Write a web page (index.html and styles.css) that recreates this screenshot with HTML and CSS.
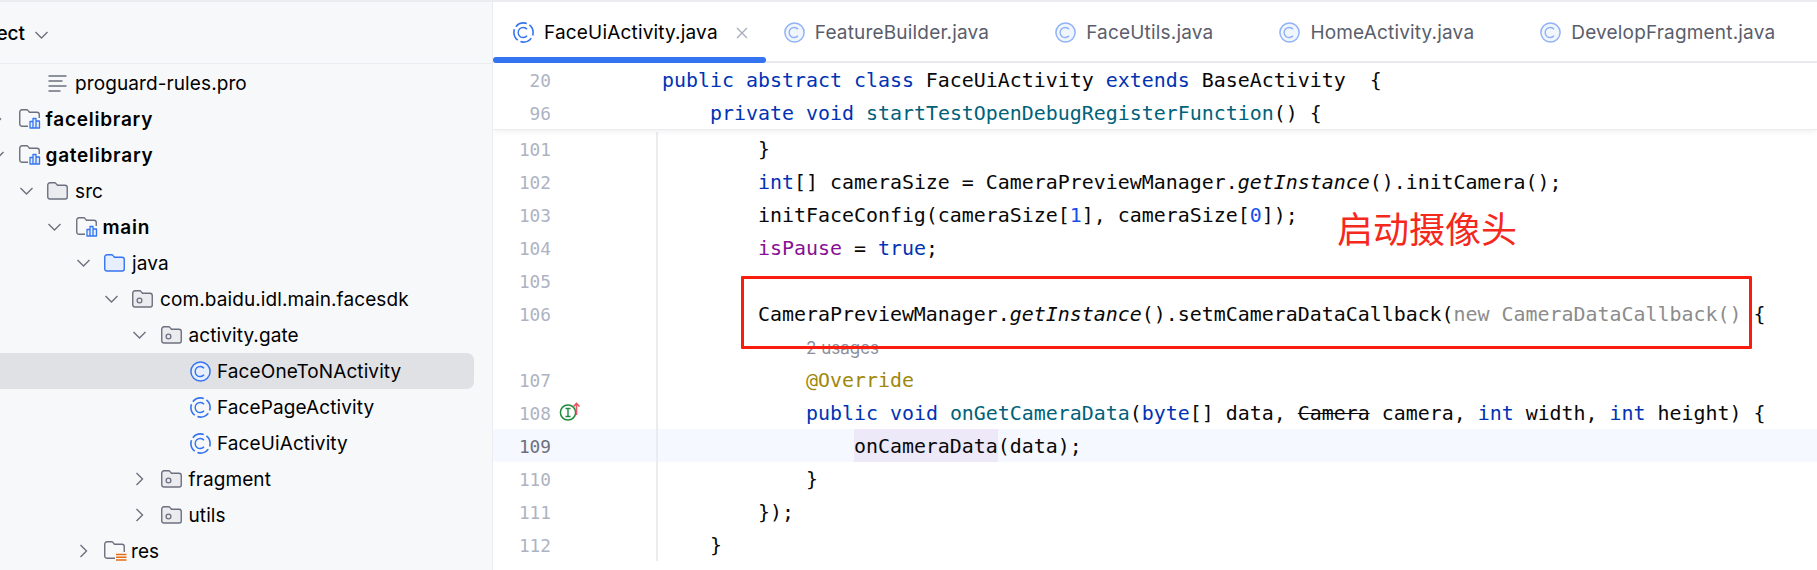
FILE: index.html
```html
<!DOCTYPE html>
<html lang="en">
<head>
<meta charset="utf-8">
<title>FaceUiActivity.java</title>
<link rel="stylesheet" href="styles.css">
</head>
<body>
<svg class="defs" xmlns="http://www.w3.org/2000/svg">
  <symbol id="chev-down" viewBox="0 0 15 8"><path d="M1.5 1l6 6 6-6" fill="none" stroke="#6c707e" stroke-width="1.4"/></symbol>
  <symbol id="chev-right" viewBox="0 0 15 14"><path d="M4.5 1l6 6-6 6" fill="none" stroke="#6c707e" stroke-width="1.4"/></symbol>
  <symbol id="folder" viewBox="0 0 21 18"><path d="M.75 3A2.25 2.25 0 0 1 3 .75h4.6c.5 0 1 .2 1.3.6l1.6 1.9h7.5a2.25 2.25 0 0 1 2.25 2.25v9.5a2 2 0 0 1-2 2H3A2.25 2.25 0 0 1 .75 15z" fill="#ebecf0" stroke="#6c707e" stroke-width="1.4"/></symbol>
  <symbol id="pkg" viewBox="0 0 21 18"><path d="M.75 3A2.25 2.25 0 0 1 3 .75h4.6c.5 0 1 .2 1.3.6l1.6 1.9h7.5a2.25 2.25 0 0 1 2.25 2.25v9.5a2 2 0 0 1-2 2H3A2.25 2.25 0 0 1 .75 15z" fill="#ebecf0" stroke="#6c707e" stroke-width="1.4"/><circle cx="7.5" cy="10.5" r="2.4" fill="none" stroke="#6c707e" stroke-width="1.3"/></symbol>
  <symbol id="java" viewBox="0 0 21 18"><path d="M.75 3A2.25 2.25 0 0 1 3 .75h4.6c.5 0 1 .2 1.3.6l1.6 1.9h7.5a2.25 2.25 0 0 1 2.25 2.25v9.5a2 2 0 0 1-2 2H3A2.25 2.25 0 0 1 .75 15z" fill="#e7effd" stroke="#3574f0" stroke-width="1.4"/></symbol>
  <symbol id="module" viewBox="0 0 22 20"><path d="M9 17.25H3A2.25 2.25 0 0 1 .75 15V3A2.25 2.25 0 0 1 3 .75h4.6c.5 0 1 .2 1.3.6l1.6 1.9h7.5a2.25 2.25 0 0 1 2.25 2.25V9" fill="none" stroke="#6c707e" stroke-width="1.4"/><path d="M11 12.5h3v6.5h-3zM14 9.5h3V19h-3zM17 12h3.5v7H17z" fill="#e7effd" stroke="#3574f0" stroke-width="1.3" stroke-linejoin="round"/></symbol>
  <symbol id="res" viewBox="0 0 23 20"><path d="M11 17.25H3A2.25 2.25 0 0 1 .75 15V3A2.25 2.25 0 0 1 3 .75h4.6c.5 0 1 .2 1.3.6l1.6 1.9h7.5a2.25 2.25 0 0 1 2.25 2.25V11" fill="none" stroke="#6c707e" stroke-width="1.4"/><path d="M12 13.5h10.5M12 16.2h10.5M12 19h10.5" fill="none" stroke="#e66d17" stroke-width="1.5"/></symbol>
  <symbol id="lines" viewBox="0 0 19 17"><path d="M.5 1h18M.5 6h14M.5 11h18M.5 16h12" fill="none" stroke="#6c707e" stroke-width="1.4"/></symbol>
  <symbol id="cls" viewBox="0 0 21 21"><circle cx="10.5" cy="10.5" r="9.6" fill="#e7effd" stroke="#3574f0" stroke-width="1.5"/><path d="M14 7.3a5 5 0 1 0 0 6.4" fill="none" stroke="#3574f0" stroke-width="1.4"/></symbol>
  <symbol id="cls-d" viewBox="0 0 21 21"><circle cx="10.5" cy="10.5" r="9.6" fill="none" stroke="#3574f0" stroke-width="1.6" stroke-dasharray="12.1 3" stroke-dashoffset="-6"/><path d="M14 7.3a5 5 0 1 0 0 6.4" fill="none" stroke="#3574f0" stroke-width="1.4"/></symbol>
</svg>

<div class="app">
  <aside class="side">
    <header class="side-head">
      <span class="side-title">Project</span>
      <svg class="ico-chev-head"><use href="#chev-down"/></svg>
    </header>
    <div class="tree">
      <div class="row l1"><span class="arrow"></span><svg class="ico ico-lines"><use href="#lines"/></svg><span>proguard-rules.pro</span></div>
      <div class="row l0 mod"><span class="arrow"><svg class="cr"><use href="#chev-right"/></svg></span><svg class="ico ico-mod"><use href="#module"/></svg><b>facelibrary</b></div>
      <div class="row l0 mod"><span class="arrow"><svg class="cd"><use href="#chev-down"/></svg></span><svg class="ico ico-mod"><use href="#module"/></svg><b>gatelibrary</b></div>
      <div class="row l1"><span class="arrow"><svg class="cd"><use href="#chev-down"/></svg></span><svg class="ico"><use href="#folder"/></svg><span>src</span></div>
      <div class="row l2"><span class="arrow"><svg class="cd"><use href="#chev-down"/></svg></span><svg class="ico ico-mod"><use href="#module"/></svg><b>main</b></div>
      <div class="row l3"><span class="arrow"><svg class="cd"><use href="#chev-down"/></svg></span><svg class="ico"><use href="#java"/></svg><span>java</span></div>
      <div class="row l4"><span class="arrow"><svg class="cd"><use href="#chev-down"/></svg></span><svg class="ico"><use href="#pkg"/></svg><span>com.baidu.idl.main.facesdk</span></div>
      <div class="row l5"><span class="arrow"><svg class="cd"><use href="#chev-down"/></svg></span><svg class="ico"><use href="#pkg"/></svg><span>activity.gate</span></div>
      <div class="row l6 selected"><span class="arrow"></span><svg class="ico ico-cls"><use href="#cls"/></svg><span>FaceOneToNActivity</span></div>
      <div class="row l6"><span class="arrow"></span><svg class="ico ico-cls"><use href="#cls-d"/></svg><span>FacePageActivity</span></div>
      <div class="row l6"><span class="arrow"></span><svg class="ico ico-cls"><use href="#cls-d"/></svg><span>FaceUiActivity</span></div>
      <div class="row l5"><span class="arrow"><svg class="cr"><use href="#chev-right"/></svg></span><svg class="ico"><use href="#pkg"/></svg><span>fragment</span></div>
      <div class="row l5"><span class="arrow"><svg class="cr"><use href="#chev-right"/></svg></span><svg class="ico"><use href="#pkg"/></svg><span>utils</span></div>
      <div class="row l3"><span class="arrow"><svg class="cr"><use href="#chev-right"/></svg></span><svg class="ico ico-res"><use href="#res"/></svg><span>res</span></div>
    </div>
  </aside>

  <main class="main">
    <nav class="tabs">
      <div class="tab active"><svg class="tab-ico"><use href="#cls-d"/></svg><span>FaceUiActivity.java</span><svg class="tab-close" viewBox="0 0 12 12"><path d="M1 1l10 10M11 1L1 11" stroke="#a8adbd" stroke-width="1.4" fill="none"/></svg></div>
      <div class="tab"><svg class="tab-ico"><use href="#cls"/></svg><span>FeatureBuilder.java</span></div>
      <div class="tab"><svg class="tab-ico"><use href="#cls"/></svg><span>FaceUtils.java</span></div>
      <div class="tab"><svg class="tab-ico"><use href="#cls"/></svg><span>HomeActivity.java</span></div>
      <div class="tab"><svg class="tab-ico"><use href="#cls"/></svg><span>DevelopFragment.java</span></div>
    </nav>

    <div class="editor">
      <div class="sticky">
        <div class="line"><span class="ln">20</span><span class="gut bare"></span><code class="code"><i class="k">public abstract class</i> FaceUiActivity <i class="k">extends</i> BaseActivity  {</code></div>
        <div class="line"><span class="ln">96</span><span class="gut bare"></span><code class="code">    <i class="k">private void</i> <i class="m">startTestOpenDebugRegisterFunction</i>() {</code></div>
      </div>
      <div class="body">
        <div class="line"><span class="ln">101</span><span class="gut"></span><code class="code">        }</code></div>
        <div class="line"><span class="ln">102</span><span class="gut"></span><code class="code">        <i class="k">int</i>[] cameraSize = CameraPreviewManager.<em>getInstance</em>().initCamera();</code></div>
        <div class="line"><span class="ln">103</span><span class="gut"></span><code class="code">        initFaceConfig(cameraSize[<i class="n">1</i>], cameraSize[<i class="n">0</i>]);</code></div>
        <div class="line"><span class="ln">104</span><span class="gut"></span><code class="code">        <i class="f">isPause</i> = <i class="k">true</i>;</code></div>
        <div class="line"><span class="ln">105</span><span class="gut"></span><code class="code"></code></div>
        <div class="line"><span class="ln">106</span><span class="gut"></span><code class="code">        CameraPreviewManager.<em>getInstance</em>().setmCameraDataCallback(<i class="h">new CameraDataCallback()</i> {</code></div>
        <div class="line"><span class="ln"></span><span class="gut"></span><span class="usages">2 usages</span></div>
        <div class="line"><span class="ln">107</span><span class="gut"></span><code class="code">            <i class="a">@Override</i></code></div>
        <div class="line"><span class="ln">108</span><span class="gut">
          <svg class="mark" viewBox="0 0 26 22"><circle cx="9" cy="12.5" r="7.6" fill="none" stroke="#208a3c" stroke-width="1.5"/><path d="M6.5 8.500h5M6.500 16.500h5M9 8.500v8" fill="none" stroke="#208a3c" stroke-width="1.4"/><path d="M17.500 15V3.500M14.500 6.500l3-3 3 3" fill="none" stroke="#e55765" stroke-width="1.6"/></svg>
        </span><code class="code">            <i class="k">public void</i> <i class="m">onGetCameraData</i>(<i class="k">byte</i>[] data, <s>Camera</s> camera, <i class="k">int</i> width, <i class="k">int</i> height) {</code></div>
        <div class="line current"><span class="ln">109</span><span class="gut"></span><code class="code">                <span class="hit">onCameraData</span>(data);</code></div>
        <div class="line"><span class="ln">110</span><span class="gut"></span><code class="code">            }</code></div>
        <div class="line"><span class="ln">111</span><span class="gut"></span><code class="code">        });</code></div>
        <div class="line"><span class="ln">112</span><span class="gut"></span><code class="code">    }</code></div>
      </div>
      <div class="note">启动摄像头</div>
      <div class="redbox"></div>
    </div>
  </main>
</div>
</body>
</html>
```

FILE: styles.css
```css
* { box-sizing: border-box; }
html, body { margin: 0; padding: 0; height: 100%; overflow: hidden; background: #fff; }
.defs { display: none; }

.app {
  display: flex;
  width: 1817px;
  height: 570px;
  border-top: 2px solid #ebecf0;
  font-family: Inter, "Noto Sans", sans-serif;
  color: #000;
}

/* project tree */
.side {
  flex: none;
  width: 493px;
  background: #f7f8fa;
  border-right: 1px solid #ebecf0;
  overflow: hidden;
}
.side-head {
  display: flex;
  align-items: center;
  height: 62px;
  padding-top: 2px;
  border-bottom: 1px solid #ebecf0;
  font-size: 19px;
  font-weight: 500;
  white-space: nowrap;
}
.side-title { margin-left: -39px; }
.ico-chev-head { width: 15px; height: 8px; margin-left: 9px; margin-top: 3px; }

.tree { margin-left: -10px; width: 484px; padding-top: 1px; }
.row {
  display: flex;
  align-items: center;
  height: 36px;
  font-size: 19px;
  letter-spacing: .1px;
  white-space: nowrap;
  color: #000;
  border-radius: 0 7px 7px 0;
}
.row b { font-weight: 600; letter-spacing: .75px; }
.row.selected { background: #dfe1e5; }
.l0 { padding-left: 0; }
.l1 { padding-left: 28.5px; }
.l2 { padding-left: 57px; }
.l3 { padding-left: 85.5px; }
.l4 { padding-left: 113.5px; }
.l5 { padding-left: 142px; }
.l6 { padding-left: 170.5px; }
.arrow { flex: none; width: 28.5px; height: 36px; display: flex; align-items: center; }
.cd { width: 15px; height: 8px; }
.cr { width: 15px; height: 14px; }
.ico { flex: none; width: 21px; height: 18px; margin-right: 7px; }
.ico-mod { width: 22px; height: 20px; margin-right: 5px; }
.ico-res { width: 23px; height: 20px; margin-right: 4px; }
.ico-lines { width: 19px; height: 17px; margin-left: 1px; margin-right: 8px; }
.ico-cls { height: 21px; margin-left: 1px; margin-right: 6px; }

/* editor */
.main { flex: 1; min-width: 0; background: #fff; overflow: hidden; }
.tabs {
  display: flex;
  height: 61px;
  border-bottom: 2px solid #ebecf0;
  font-size: 19px;
  letter-spacing: .18px;
  color: #5a5d6b;
  white-space: nowrap;
}
.tab {
  position: relative;
  display: flex;
  align-items: center;
  height: 59px;
  padding: 2px 48px 0 18px;
  gap: 10px;
}
.tab-ico { flex: none; width: 21px; height: 21px; opacity: .55; }
.tab.active { padding-left: 20px; padding-right: 18px; color: #000; }
.tab.active .tab-ico { opacity: 1; }
.tab.active::after {
  content: "";
  position: absolute;
  left: 0;
  right: 0;
  bottom: -2px;
  height: 6px;
  border-radius: 3px;
  background: #3574f0;
}
.tab-close { flex: none; width: 12px; height: 12px; margin-left: 8px; }

.editor { position: relative; height: 507px; }
.sticky {
  position: relative;
  height: 67px;
  padding-top: 1px;
  border-bottom: 1px solid #ebecf0;
  box-shadow: 0 2px 6px rgba(0, 0, 0, .06);
  z-index: 1;
}
.body { padding-top: 2px; }
.line {
  display: flex;
  height: 33px;
  line-height: 35px;
  font-family: "DejaVu Sans Mono", "Liberation Mono", monospace;
  font-size: 19.93px;
  color: #080808;
  white-space: pre;
}
.line.current { background: #f5f8fe; }
.sticky .line { height: 32.5px; line-height: 33.5px; }
.ln {
  flex: none;
  width: 58px;
  text-align: right;
  font-size: 17.8px;
  color: #aeb3c2;
}
.line.current .ln { color: #6c707e; }
.gut {
  flex: none;
  position: relative;
  width: 107px;
  border-right: 2px solid #ebecf0;
}
.gut.bare { border-right-color: transparent; }
.mark { position: absolute; left: 8px; top: 4px; width: 26px; height: 22px; }
.code { font: inherit; padding-left: 4px; }
.code i { font-style: normal; }
.code em { font-style: italic; }
.k { color: #0033b3; }
.m { color: #00627a; }
.f { color: #871094; }
.n { color: #1750eb; }
.a { color: #9e880d; }
.h { color: #8c8c8c; }
.hit { display: inline-block; height: 33px; background: #ede9f9; }
.usages {
  padding-left: 148px;
  font-family: Inter, sans-serif;
  font-size: 17px;
  line-height: 37px;
  color: #8c8f9b;
}

.note {
  position: absolute;
  left: 844px;
  top: 142px;
  font-family: "Noto Sans CJK SC", sans-serif;
  font-size: 36px;
  line-height: 44px;
  color: #f5281c;
  z-index: 2;
}
.redbox {
  position: absolute;
  left: 248px;
  top: 213px;
  width: 1011px;
  height: 73px;
  border: 3px solid #fb1c10;
  border-radius: 1px;
  z-index: 2;
}
```
